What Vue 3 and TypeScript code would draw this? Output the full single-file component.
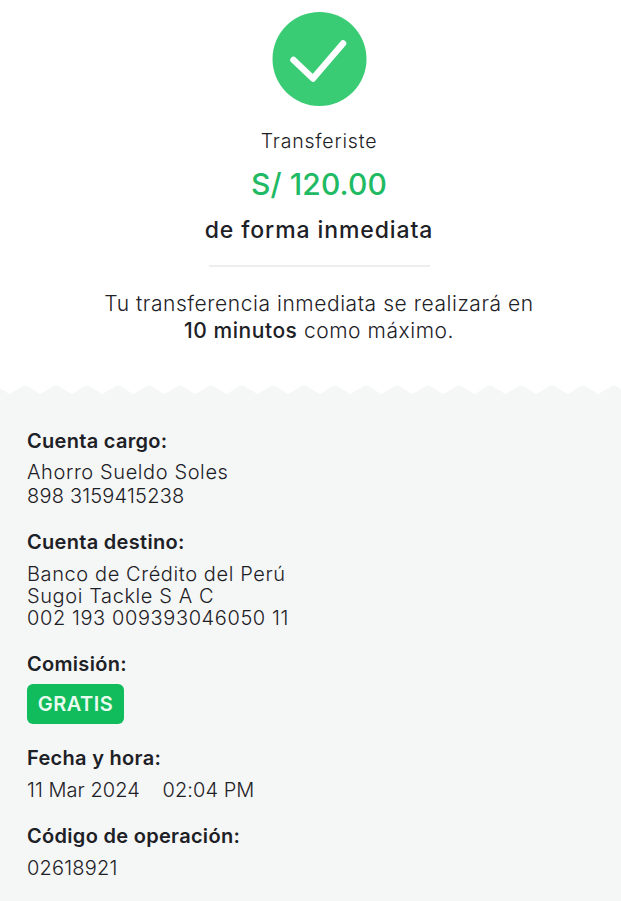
<script setup lang="ts">
interface Detail {
  label: string
  lines?: string[]
  badge?: string
}

const stamp = '11 Mar 2024\u00a0\u00a0\u00a0\u00a002:04 PM'

const details: Detail[] = [
  { label: 'Cuenta cargo:', lines: ['Ahorro Sueldo Soles', '898 3159415238'] },
  { label: 'Cuenta destino:', lines: ['Banco de Crédito del Perú', 'Sugoi Tackle S A C', '002 193 009393046050 11'] },
  { label: 'Comisión:', badge: 'GRATIS' },
  { label: 'Fecha y hora:', lines: [stamp] },
  { label: 'Código de operación:', lines: ['02618921'] },
]

// these lines sit tighter than the rest of the values
const tight = new Set(['898 3159415238', '02618921'])
</script>

<template>
  <main class="receipt">
    <section class="summary">
      <svg class="check" width="95" height="95" viewBox="0 0 95 95">
        <circle cx="47.5" cy="47" r="47" fill="#39cc74" />
        <path d="M21.5 48 L41 66.5 L71 31.5" fill="none" stroke="#fff" stroke-width="6.5" stroke-linecap="round" stroke-linejoin="round" />
      </svg>
      <p class="sent">Transferiste</p>
      <p class="amount">S/ 120.00</p>
      <p class="mode">de forma inmediata</p>
      <hr class="rule" />
      <p class="note">Tu transferencia inmediata se realizará en<br /><strong>10 minutos</strong> como máximo.</p>
    </section>

    <svg class="wave" width="621" height="12" viewBox="0 0 621 12">
      <defs>
        <pattern id="tooth" width="31" height="12" patternUnits="userSpaceOnUse" x="9.5">
          <path d="M0 12 V9.4 Q0 9 .8 8.6 L13.5 .9 Q15.5 0 17.5 .9 L30.2 8.6 Q31 9 31 9.4 V12 Z" fill="#f5f6f6" />
        </pattern>
      </defs>
      <rect width="621" height="12" fill="url(#tooth)" />
    </svg>

    <section class="details">
      <div v-for="item in details" :key="item.label" class="row">
        <h2 class="label">{{ item.label }}</h2>
        <span v-if="item.badge" class="badge">{{ item.badge }}</span>
        <p v-else class="value">
          <span
            v-for="line in item.lines"
            :key="line"
            class="line"
            :class="{ tight: tight.has(line), stamp: line === stamp }"
          >{{ line }}</span>
        </p>
      </div>
    </section>
  </main>
</template>

<style>
html, body { background: #f5f6f6; }
</style>

<style scoped>
.receipt {
  width: 621px;
  height: 901px;
  overflow: hidden;
  background: #f5f6f6;
  font-family: Inter, "Open Sans", sans-serif;
  font-weight: 300;
  color: #1d2126;
}

.summary {
  background: #fff;
  padding: 12px 0 0 17px;
  height: 385px;
  box-sizing: border-box;
  display: flex;
  flex-direction: column;
  align-items: center;
  text-align: center;
}

.check { display: block; flex-shrink: 0; }

.sent {
  margin: 22px 0 0;
  font-size: 19.5px;
  line-height: 24px;
  letter-spacing: .8px;
}

.amount {
  margin: 12px 0 0;
  font-size: 30px;
  line-height: 38px;
  font-weight: 500;
  letter-spacing: .1px;
  color: #1fba63;
}

.mode {
  margin: 13px 0 0;
  font-size: 23px;
  line-height: 28px;
  font-weight: 500;
  letter-spacing: .9px;
}

.rule {
  width: 221px;
  height: 2px;
  margin: 21px 0 0;
  border: 0;
  background: #eceeef;
}

.note {
  margin: 23px 0 0;
  font-size: 21px;
  line-height: 27px;
  letter-spacing: .55px;
}

.note strong { font-weight: 500; }

.wave { display: block; background: #fff; }

.details {
  padding: 32px 27px 0;
  display: flex;
  flex-direction: column;
}

.row { margin-bottom: 22px; }
.row:first-child { margin-bottom: 21px; }

.label {
  margin: 0;
  font-size: 20px;
  line-height: 24px;
  font-weight: 600;
  letter-spacing: .3px;
}

.value {
  margin: 9px 0 1px;
  font-size: 20px;
  line-height: 22px;
  letter-spacing: .6px;
}

.row:first-child .value {
  margin-top: 7px;
  line-height: 24px;
}

.line { display: block; }
.line.tight { letter-spacing: .2px; }
.line.stamp { letter-spacing: .05px; }

.badge {
  display: block;
  width: 97px;
  box-sizing: border-box;
  text-align: center;
  margin-top: 8px;
  height: 40px;
  line-height: 40px;
  border-radius: 6px;
  background: #10bc5c;
  color: #e9fbef;
  font-size: 20px;
  font-weight: 600;
  letter-spacing: .5px;
}
</style>
